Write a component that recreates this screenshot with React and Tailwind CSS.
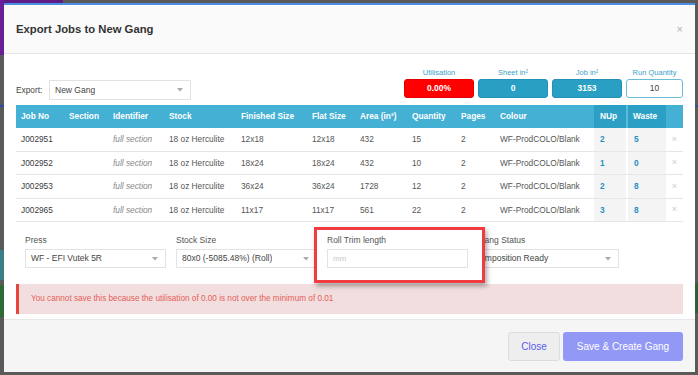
import React from 'react';

const rows = [
  { job: 'J002951', fin: '12x18', flat: '12x18', area: '432', qty: '15', nup: '2', waste: '5' },
  { job: 'J002952', fin: '18x24', flat: '18x24', area: '432', qty: '10', nup: '1', waste: '0' },
  { job: 'J002953', fin: '36x24', flat: '36x24', area: '1728', qty: '12', nup: '2', waste: '8' },
  { job: 'J002965', fin: '11x17', flat: '11x17', area: '561', qty: '22', nup: '3', waste: '8' },
];

const gridCols =
  'grid grid-cols-[48px_44px_56px_72px_71px_48px_52px_49px_39px_99px_34px_38px_17px]';

const Caret = () => (
  <svg width="6" height="4" viewBox="0 0 6 4" className="shrink-0">
    <path d="M0 0 L6 0 L3 3.5 Z" fill="#aaa" />
  </svg>
);

const Select = ({ value, className = '' }) => (
  <div
    className={`h-[19px] w-[141px] border border-[#e3e3e3] bg-white flex items-center justify-between pl-[5px] pr-[7px] text-[8.5px] text-[#444] ${className}`}
  >
    <span className="truncate">{value}</span>
    <Caret />
  </div>
);

const Stat = ({ label, value, box }) => (
  <div className="flex flex-col items-center">
    <div className="text-[7.5px] leading-[10px] text-[#3a9fc6] mb-[1px]">{label}</div>
    <div className={`w-full h-[19px] flex items-center justify-center rounded-[3px] text-[8.5px] ${box}`}>
      {value}
    </div>
  </div>
);

const App = () => {
  return (
    <div className="relative w-[698px] h-[375px] overflow-hidden bg-[#5a5a5a] font-['Liberation_Sans',Arial,sans-serif]">
      {/* page behind the modal */}
      <div className="absolute left-0 top-0 w-[63px] h-[3px] bg-[#5e1b86]" />
      <div className="absolute left-0 top-0 w-[4px] h-[55px] bg-[#6a1f96]" />
      <div className="absolute left-0 top-[105px] w-[4px] h-[2px] bg-[#2a4fa8]" />
      <div className="absolute left-0 top-[250px] w-[4px] h-[30px] bg-[#3c7d8a]" />
      <div className="absolute left-0 top-[285px] w-[4px] h-[32px] bg-[#2f6b34]" />
      <div className="absolute right-0 top-[105px] w-[3px] h-[2px] bg-[#2a4fa8]" />
      <div className="absolute right-0 top-[283px] w-[3px] h-[30px] bg-[#2f5f34]" />

      <div className="relative ml-[4px] mt-[3px] w-[691px] h-[369px] bg-white flex flex-col">
        {/* header */}
        <div className="h-[51px] shrink-0 border-t-2 border-[#4a8fe2] bg-[#fafafa] border-b border-b-[#e6e6e6] flex items-center justify-between pl-[12px] pr-[12px]">
          <div className="text-[11.3px] font-bold text-[#333]">Export Jobs to New Gang</div>
          <div className="text-[11px] text-[#b0b0b0] leading-none">×</div>
        </div>

        {/* body */}
        <div className="flex-1 px-[12px] pt-[14px]">
          <div className="flex items-end justify-between">
            <div className="flex items-center">
              <span className="text-[8.3px] text-[#444] w-[33px]">Export:</span>
              <Select value="New Gang" className="h-[20px] w-[142px]" />
            </div>
            <div className="flex gap-[4px] mb-[2px]">
              <div className="w-[70px]">
                <Stat label="Utilisation" value="0.00%" box="bg-[#ff0000] border border-[#e40000] text-white font-bold" />
              </div>
              <div className="w-[70px]">
                <Stat label="Sheet in²" value="0" box="bg-[#2a9fc4] border border-[#2490b5] text-white font-bold" />
              </div>
              <div className="w-[70px]">
                <Stat label="Job in²" value="3153" box="bg-[#2a9fc4] border border-[#2490b5] text-white font-bold" />
              </div>
              <div className="w-[57px]">
                <Stat label="Run Quantity" value="10" box="bg-white border border-[#6bbbd9] text-[#444]" />
              </div>
            </div>
          </div>

          {/* jobs table */}
          <div className="mt-[5px] text-[8.3px]">
            <div className={`${gridCols} h-[23px] bg-[#44b0d4] text-white font-bold`}>
              <div className="pl-[5px] flex items-center">Job No</div>
              <div className="pl-[5px] flex items-center">Section</div>
              <div className="pl-[5px] flex items-center">Identifier</div>
              <div className="pl-[5px] flex items-center">Stock</div>
              <div className="pl-[5px] flex items-center">Finished Size</div>
              <div className="pl-[5px] flex items-center">Flat Size</div>
              <div className="pl-[5px] flex items-center">Area (in²)</div>
              <div className="pl-[5px] flex items-center">Quantity</div>
              <div className="pl-[5px] flex items-center">Pages</div>
              <div className="pl-[5px] flex items-center">Colour</div>
              <div className="pl-[6px] flex items-center bg-[#2c9fc5] border-r-2 border-[#5cbbdc]">NUp</div>
              <div className="pl-[5px] flex items-center bg-[#2c9fc5]">Waste</div>
              <div />
            </div>
            {rows.map((r) => (
              <div key={r.job} className={`${gridCols} h-[23.5px] border-b border-[#e6e6e6] text-[#555]`}>
                <div className="pl-[5px] flex items-center text-[#3a3a3a]">{r.job}</div>
                <div />
                <div className="pl-[5px] flex items-center italic text-[#888]">full section</div>
                <div className="pl-[5px] flex items-center">18 oz Herculite</div>
                <div className="pl-[5px] flex items-center">{r.fin}</div>
                <div className="pl-[5px] flex items-center">{r.flat}</div>
                <div className="pl-[5px] flex items-center">{r.area}</div>
                <div className="pl-[5px] flex items-center">{r.qty}</div>
                <div className="pl-[5px] flex items-center">2</div>
                <div className="pl-[5px] flex items-center">WF-ProdCOLO/Blank</div>
                <div className="pl-[6px] flex items-center bg-[#f4f4f4] border-r-2 border-white font-bold text-[#2a8fc2]">{r.nup}</div>
                <div className="pl-[6px] flex items-center bg-[#f4f4f4] font-bold text-[#2a8fc2]">{r.waste}</div>
                <div className="flex items-center justify-center text-[#ccc] text-[9px]">×</div>
              </div>
            ))}
          </div>

          {/* press settings */}
          <div className="mt-[13px] pl-[9px] flex gap-[10px]">
            <div>
              <div className="text-[8.5px] leading-[10px] text-[#555] mb-[4px]">Press</div>
              <Select value="WF - EFI Vutek 5R" />
            </div>
            <div>
              <div className="text-[8.5px] leading-[10px] text-[#555] mb-[4px]">Stock Size</div>
              <Select value="80x0 (-5085.48%) (Roll)" />
            </div>
            <div className="relative">
              <div className="absolute left-[-13px] top-[-8px] w-[171px] h-[56px] border-[3px] border-[#f23b40] bg-white z-10 shadow-[2px_3px_5px_rgba(0,0,0,0.35)]" />
              <div className="relative z-20">
                <div className="text-[8.5px] leading-[10px] text-[#555] mb-[4px]">Roll Trim length</div>
                <input
                  readOnly
                  placeholder="mm"
                  className="block h-[19px] w-[141px] border border-[#e3e3e3] bg-white px-[5px] text-[8px] italic placeholder:text-[#c4c4c4] outline-none"
                />
              </div>
            </div>
            <div>
              <div className="text-[8.5px] leading-[10px] text-[#555] mb-[4px]">Gang Status</div>
              <div className="h-[19px] w-[141px] border border-[#e3e3e3] bg-white flex items-center justify-between pr-[7px] text-[8.5px] text-[#444] overflow-hidden">
                <span className="whitespace-nowrap -ml-[5px]">Composition Ready</span>
                <Caret />
              </div>
            </div>
          </div>

          {/* validation message */}
          <div className="mt-[16px] h-[30px] bg-[#f2dede] border-l-[3px] border-[#e5473b] flex items-center pl-[12px] text-[8.2px] text-[#e3605a]">
            You cannot save this because the utilisation of 0.00 is not over the minimum of 0.01
          </div>
        </div>

        {/* footer */}
        <div className="h-[53px] shrink-0 bg-[#f5f5f5] border-t border-[#e8e8e8] flex items-center justify-end gap-[3px] pr-[12px]">
          <button className="h-[29px] w-[52px] rounded-[3px] bg-[#eeeeee] border border-[#dcdcdc] text-[10px] text-[#5b5bef]">
            Close
          </button>
          <button className="h-[29px] w-[120px] rounded-[3px] bg-[#9298f6] text-[10px] text-white">
            Save &amp; Create Gang
          </button>
        </div>
      </div>
    </div>
  );
};

export default App;
